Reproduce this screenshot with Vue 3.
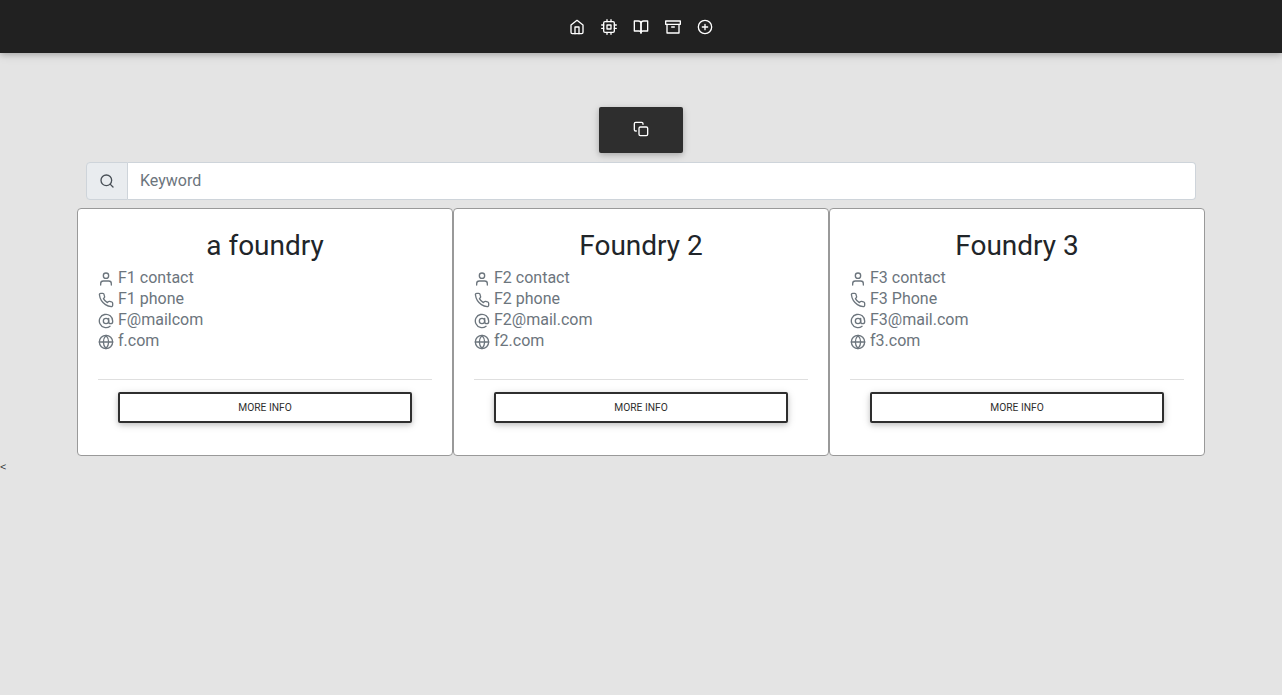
<script setup>
const icons = {
  home: '<path d="M3 9l9-7 9 7v11a2 2 0 0 1-2 2H5a2 2 0 0 1-2-2z"/><polyline points="9 22 9 12 15 12 15 22"/>',
  cpu: '<rect x="4" y="4" width="16" height="16" rx="2" ry="2"/><rect x="9" y="9" width="6" height="6"/><path d="M9 1v3M15 1v3M9 20v3M15 20v3M20 9h3M20 14h3M1 9h3M1 14h3"/>',
  book: '<path d="M2 3h6a4 4 0 0 1 4 4v14a3 3 0 0 0-3-3H2z"/><path d="M22 3h-6a4 4 0 0 0-4 4v14a3 3 0 0 1 3-3h7z"/>',
  archive: '<polyline points="21 8 21 21 3 21 3 8"/><rect x="1" y="3" width="22" height="5"/><line x1="10" y1="12" x2="14" y2="12"/>',
  plus: '<circle cx="12" cy="12" r="10"/><path d="M12 8v8M8 12h8"/>',
  copy: '<rect x="9" y="9" width="13" height="13" rx="2" ry="2"/><path d="M5 15H4a2 2 0 0 1-2-2V4a2 2 0 0 1 2-2h9a2 2 0 0 1 2 2v1"/>',
  search: '<circle cx="11" cy="11" r="8"/><line x1="21" y1="21" x2="16.65" y2="16.65"/>',
  user: '<path d="M20 21v-2a4 4 0 0 0-4-4H8a4 4 0 0 0-4 4v2"/><circle cx="12" cy="7" r="4"/>',
  phone: '<path d="M22 16.92v3a2 2 0 0 1-2.18 2 19.79 19.79 0 0 1-8.63-3.07 19.5 19.5 0 0 1-6-6 19.79 19.79 0 0 1-3.07-8.67A2 2 0 0 1 4.11 2h3a2 2 0 0 1 2 1.72 12.84 12.84 0 0 0 .7 2.81 2 2 0 0 1-.45 2.11L8.09 9.91a16 16 0 0 0 6 6l1.27-1.27a2 2 0 0 1 2.11-.45 12.84 12.84 0 0 0 2.81.7A2 2 0 0 1 22 16.92z"/>',
  at: '<circle cx="12" cy="12" r="4"/><path d="M16 8v5a3 3 0 0 0 6 0v-1a10 10 0 1 0-3.92 7.94"/>',
  globe: '<circle cx="12" cy="12" r="10"/><line x1="2" y1="12" x2="22" y2="12"/><path d="M12 2a15.3 15.3 0 0 1 4 10 15.3 15.3 0 0 1-4 10 15.3 15.3 0 0 1-4-10 15.3 15.3 0 0 1 4-10z"/>',
}
const nav = ['home', 'cpu', 'book', 'archive', 'plus']
const fields = ['user', 'phone', 'at', 'globe']
const foundries = [
  { name: 'a foundry', details: ['F1 contact', 'F1 phone', 'F@mailcom', 'f.com'] },
  { name: 'Foundry 2', details: ['F2 contact', 'F2 phone', 'F2@mail.com', 'f2.com'] },
  { name: 'Foundry 3', details: ['F3 contact', 'F3 Phone', 'F3@mail.com', 'f3.com'] },
]
</script>

<template>
  <div class="page">
    <nav class="navbar">
      <a v-for="n in nav" :key="n" class="nav-link">
        <svg class="icon" viewBox="0 0 24 24" v-html="icons[n]"></svg>
      </a>
    </nav>
    <button class="copy-btn">
      <svg class="icon" viewBox="0 0 24 24" v-html="icons.copy"></svg>
    </button>
    <div class="search">
      <span class="search-icon">
        <svg class="icon" viewBox="0 0 24 24" v-html="icons.search"></svg>
      </span>
      <input class="search-input" type="text" placeholder="Keyword" />
    </div>
    <div class="cards">
      <section v-for="f in foundries" :key="f.name" class="card">
        <h3 class="title">{{ f.name }}</h3>
        <div v-for="(d, i) in f.details" :key="i" class="detail">
          <svg class="icon" viewBox="0 0 24 24" v-html="icons[fields[i]]"></svg>
          <span>{{ d }}</span>
        </div>
        <hr class="rule" />
        <button class="more">More info</button>
      </section>
    </div>
    <div class="stray">&lt;</div>
  </div>
</template>

<style>
body {
  background: #e4e4e4;
}
</style>

<style scoped>
.page {
  display: flex;
  flex-direction: column;
  align-items: center;
  min-height: 695px;
  font-family: Roboto, sans-serif;
  font-weight: 400;
  color: #212529;
}
.page *,
.page {
  box-sizing: border-box;
}
.icon {
  display: block;
  flex: none;
  width: 16px;
  height: 16px;
  fill: none;
  stroke: currentColor;
  stroke-width: 2;
  stroke-linecap: round;
  stroke-linejoin: round;
}
.navbar {
  display: flex;
  justify-content: center;
  align-items: center;
  gap: 16px;
  width: 100%;
  height: 53px;
  padding-top: 1px;
  background: #212121;
  color: #fff;
  box-shadow: 0 2px 5px 0 rgba(0, 0, 0, 0.16), 0 2px 10px 0 rgba(0, 0, 0, 0.12);
}
.copy-btn {
  display: flex;
  justify-content: center;
  align-items: center;
  width: 84px;
  height: 46px;
  margin: 54px 0 9px;
  padding: 0 0 2px;
  border: 0;
  border-radius: 2px;
  background: #2e2e2e;
  color: #fff;
  box-shadow: 0 2px 5px 0 rgba(0, 0, 0, 0.16), 0 2px 10px 0 rgba(0, 0, 0, 0.12);
}
.search {
  display: flex;
  width: 1110px;
  height: 38px;
}
.search-icon {
  display: flex;
  align-items: center;
  justify-content: center;
  width: 42px;
  border: 1px solid #ced4da;
  border-radius: 4px 0 0 4px;
  background: #e9ecef;
  color: #495057;
}
.search-input {
  flex: 1;
  padding: 0 12px;
  border: 1px solid #ced4da;
  border-left: 0;
  border-radius: 0 4px 4px 0;
  outline: 0;
  font: 400 16px/24px Roboto, sans-serif;
  background: #fff;
}
.search-input::placeholder {
  color: #6c757d;
  opacity: 1;
}
.cards {
  display: grid;
  grid-template-columns: repeat(3, 376px);
  margin-top: 8px;
}
.card {
  display: flex;
  flex-direction: column;
  height: 248px;
  padding: 20px;
  border: 1px solid #999;
  border-radius: 4px;
  background: #fff;
}
.title {
  margin: 0 0 4px;
  font-size: 28px;
  font-weight: 400;
  line-height: 34px;
  text-align: center;
}
.detail {
  display: flex;
  align-items: flex-start;
  gap: 4px;
  height: 21px;
  line-height: 21px;
  font-size: 16px;
  color: #6c757d;
}
.detail .icon {
  margin-top: 4px;
}
.rule {
  width: 100%;
  height: 1px;
  margin: 28px 0 12px;
  border: 0;
  background: #dfdfdf;
}
.more {
  height: 31px;
  margin: 0 20px;
  padding: 0;
  border: 2px solid #2e2e2e;
  border-radius: 2px;
  background: #fff;
  color: #2e2e2e;
  font: 400 10.24px/15px Roboto, sans-serif;
  text-transform: uppercase;
  box-shadow: 0 2px 5px 0 rgba(0, 0, 0, 0.16), 0 2px 10px 0 rgba(0, 0, 0, 0.12);
}
.stray {
  align-self: flex-start;
  margin-top: 1px;
  font-size: 13px;
  font-weight: 300;
  line-height: 19px;
}
</style>
